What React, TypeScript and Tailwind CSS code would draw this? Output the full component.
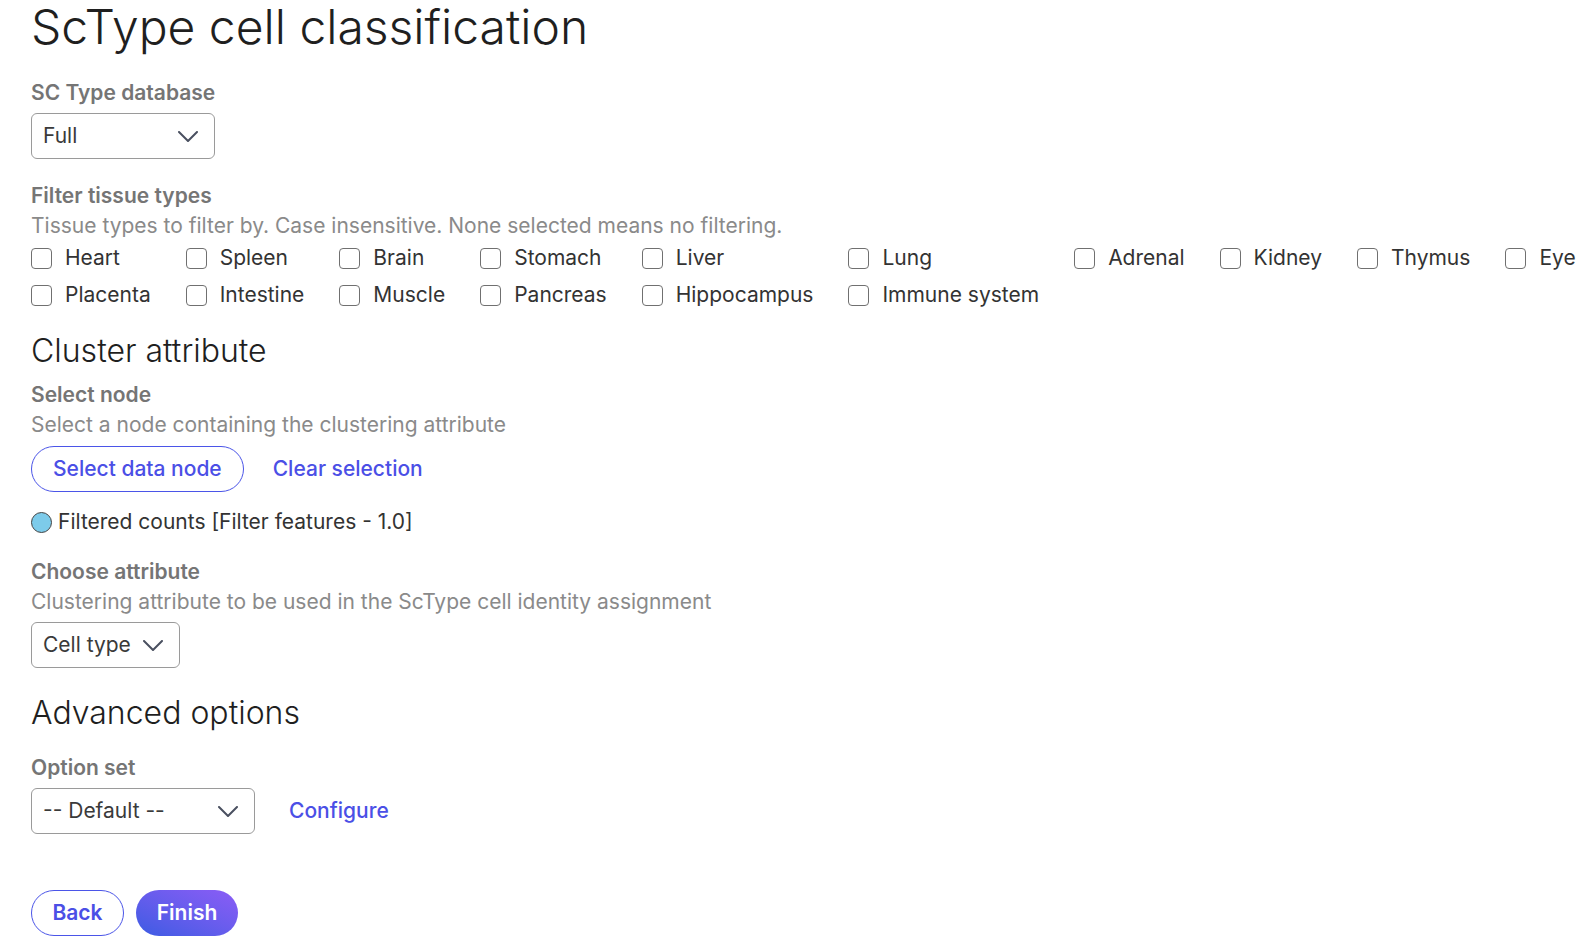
const tissues = [
  "Heart", "Spleen", "Brain", "Stomach", "Liver", "Lung", "Adrenal", "Kidney", "Thymus", "Eye",
  "Placenta", "Intestine", "Muscle", "Pancreas", "Hippocampus", "Immune system",
];

const Label = ({ children }: { children: React.ReactNode }) => (
  <div className="text-[21px] font-semibold text-[#757575] leading-[30px]">{children}</div>
);

const Hint = ({ children }: { children: React.ReactNode }) => (
  <div className="text-[21px] text-[#8a8a8a] leading-[30px]">{children}</div>
);

const Chevron = () => (
  <svg width="20" height="11" viewBox="0 0 20 11" fill="none" className="shrink-0">
    <polyline points="1,1 10,10 19,1" stroke="#4a5060" strokeWidth="2" strokeLinecap="round" strokeLinejoin="round" />
  </svg>
);

const Select = ({ value, width }: { value: string; width: string }) => (
  <div
    className={`${width} h-[46px] flex items-center justify-between pl-[11px] pr-[16px] border border-[#9a9a9a] rounded-[6px] text-[21px] text-[#3a3a3a]`}
  >
    <span>{value}</span>
    <Chevron />
  </div>
);

export default function App() {
  return (
    <div className="min-h-screen bg-white pl-[31px] font-['Inter',sans-serif] text-[#333] overflow-hidden">
      <h1 className="text-[48px] font-light text-[#1f1f1f] leading-[54px]">
        ScType cell classification
      </h1>

      <div className="mt-[24px]">
        <Label>SC Type database</Label>
        <div className="mt-[5px]">
          <Select value="Full" width="w-[184px]" />
        </div>
      </div>

      <div className="mt-[22px]">
        <Label>Filter tissue types</Label>
        <Hint>Tissue types to filter by. Case insensitive. None selected means no filtering.</Hint>
        <div className="grid w-max grid-cols-[repeat(10,auto)] justify-start gap-x-[35px] gap-y-[7px] mt-[2px]">
          {tissues.map((t) => (
            <label key={t} className="flex items-center gap-[13px] whitespace-nowrap text-[21px] text-[#333] leading-[30px]">
              <span className="w-[21px] h-[21px] rounded-[4px] border border-[#707070] bg-white shrink-0" />
              {t}
            </label>
          ))}
        </div>
      </div>

      <h2 className="mt-[21px] text-[32px] font-light text-[#1f1f1f] leading-[40px]">Cluster attribute</h2>

      <div className="mt-[9px]">
        <Label>Select node</Label>
        <Hint>Select a node containing the clustering attribute</Hint>
        <div className="flex items-center gap-[29px] mt-[6px]">
          <button className="h-[46px] px-[21px] rounded-full border border-[#4b55e8] text-[21px] font-medium text-[#4b4fe6]">
            Select data node
          </button>
          <button className="text-[21px] font-medium text-[#4b4fe6]">Clear selection</button>
        </div>
        <div className="flex items-center gap-[6px] mt-[15px] text-[21px] text-[#333] leading-[30px]">
          <span className="w-[21px] h-[21px] rounded-full bg-[#7dcbea] border border-[#444] shrink-0" />
          Filtered counts [Filter features - 1.0]
        </div>
      </div>

      <div className="mt-[20px]">
        <Label>Choose attribute</Label>
        <Hint>Clustering attribute to be used in the ScType cell identity assignment</Hint>
        <div className="mt-[5px]">
          <Select value="Cell type" width="w-[149px]" />
        </div>
      </div>

      <h2 className="mt-[25px] text-[32px] font-light text-[#1f1f1f] leading-[40px]">Advanced options</h2>

      <div className="mt-[20px]">
        <Label>Option set</Label>
        <div className="flex items-center gap-[34px] mt-[5px]">
          <Select value="-- Default --" width="w-[224px]" />
          <button className="text-[21px] font-medium text-[#4b4fe6]">Configure</button>
        </div>
      </div>

      <div className="flex items-center gap-[12px] mt-[56px] pb-[8px]">
        <button className="h-[46px] w-[93px] rounded-full border border-[#4b55e8] text-[21px] font-semibold text-[#4b4fe6]">
          Back
        </button>
        <button className="h-[46px] w-[102px] rounded-full bg-gradient-to-tr from-[#3a5be3] to-[#8b5cf6] text-[21px] font-semibold text-white">
          Finish
        </button>
      </div>
    </div>
  );
}
